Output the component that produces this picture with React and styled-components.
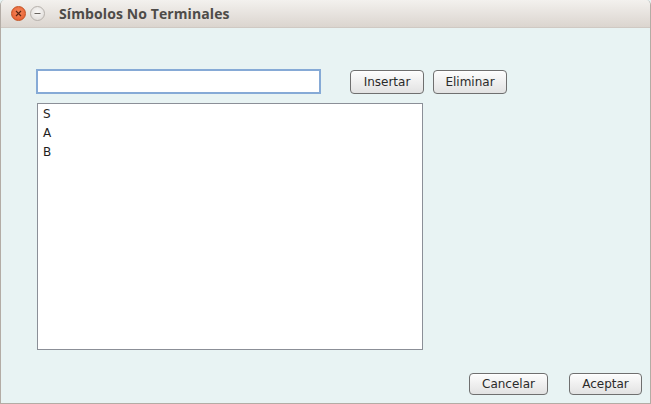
import styled, { createGlobalStyle } from 'styled-components';

const Global = createGlobalStyle`
  html, body {
    margin: 0;
    padding: 0;
    background: #e8f3f3;
  }
`;

const Window = styled.div`
  width: 651px;
  height: 404px;
  box-sizing: border-box;
  display: flex;
  flex-direction: column;
  background-color: #e8f3f3;
  border: 1px solid #b3aca5;
  border-top: none;
  border-radius: 5px 5px 0 0;
  overflow: hidden;
  font-family: "DejaVu Sans", "Liberation Sans", sans-serif;
`;

const TitleBar = styled.div`
  height: 28px;
  flex-shrink: 0;
  display: flex;
  align-items: center;
  padding-left: 10px;
  background: linear-gradient(to bottom, #f3f1ee, #dbd5cf);
  border-bottom: 1px solid #cfc9c3;
  box-sizing: border-box;
`;

const CircleButton = styled.div`
  width: 15px;
  height: 15px;
  border-radius: 50%;
  margin-right: ${props => props.gap || 4}px;
  display: flex;
  align-items: center;
  justify-content: center;
  box-sizing: border-box;
  background: ${props => props.close
    ? "radial-gradient(circle at 50% 40%, #f58a5e, #e4562a)"
    : "radial-gradient(circle at 50% 40%, #fbfaf9, #d9d5d1)"};
  border: 1px solid ${props => props.close ? "#c4501f" : "#b6b1ac"};
`;

const Title = styled.span`
  font-family: "Open Sans", "DejaVu Sans", sans-serif;
  font-weight: bold;
  font-size: 14px;
  color: #4d4b48;
  letter-spacing: 0.1px;
`;

const Content = styled.div`
  flex: 1;
  display: flex;
  flex-direction: column;
  padding: 41px 8px 8px 35px;
`;

const TopRow = styled.div`
  display: flex;
  align-items: center;
`;

const TextField = styled.input`
  width: 285px;
  height: 25px;
  box-sizing: border-box;
  border: 2px solid #86aad6;
  outline: none;
  background: #fff;
  margin-right: 29px;
  padding: 0 3px;
`;

const Button = styled.button`
  width: ${props => props.w}px;
  height: ${props => props.h || 24}px;
  margin-right: ${props => props.mr || 0}px;
  box-sizing: border-box;
  border: 1px solid #6f6f6f;
  border-radius: 4px;
  background: linear-gradient(to bottom, #fdfdfd, #e2e2e2);
  font-family: "DejaVu Sans", "Liberation Sans", sans-serif;
  font-size: 12px;
  color: #2a2a2a;
  padding: 0;
  box-shadow: inset 0 1px 0 #ffffff;
`;

const List = styled.div`
  width: 386px;
  height: 247px;
  box-sizing: border-box;
  margin: 9px 0 0 1px;
  background: #fff;
  border: 1px solid #8b8f97;
  padding: 1px 5px;
`;

const ListItem = styled.div`
  font-size: 12px;
  line-height: 19px;
  color: #1e1e1e;
`;

const Footer = styled.div`
  margin-top: auto;
  display: flex;
  justify-content: flex-end;
`;

const App = () => {
  const symbols = ["S", "A", "B"];
  return (
    <>
      <Global />
      <Window>
        <TitleBar>
          <CircleButton close gap={4}>
            <svg width="7" height="7" viewBox="0 0 7 7">
              <path d="M1 1 L6 6 M6 1 L1 6" stroke="#5a2412" strokeWidth="1.2" />
            </svg>
          </CircleButton>
          <CircleButton gap={14}>
            <svg width="7" height="7" viewBox="0 0 7 7">
              <path d="M0.5 3.5 H6.5" stroke="#6a6560" strokeWidth="1.2" />
            </svg>
          </CircleButton>
          <Title>Símbolos No Terminales</Title>
        </TitleBar>
        <Content>
          <TopRow>
            <TextField />
            <Button w={74} mr={9}>Insertar</Button>
            <Button w={74}>Eliminar</Button>
          </TopRow>
          <List>
            {symbols.map((s, i) => (
              <ListItem key={i}>{s}</ListItem>
            ))}
          </List>
          <Footer>
            <Button w={79} h={22} mr={21}>Cancelar</Button>
            <Button w={73} h={22}>Aceptar</Button>
          </Footer>
        </Content>
      </Window>
    </>
  );
};

export default App;
